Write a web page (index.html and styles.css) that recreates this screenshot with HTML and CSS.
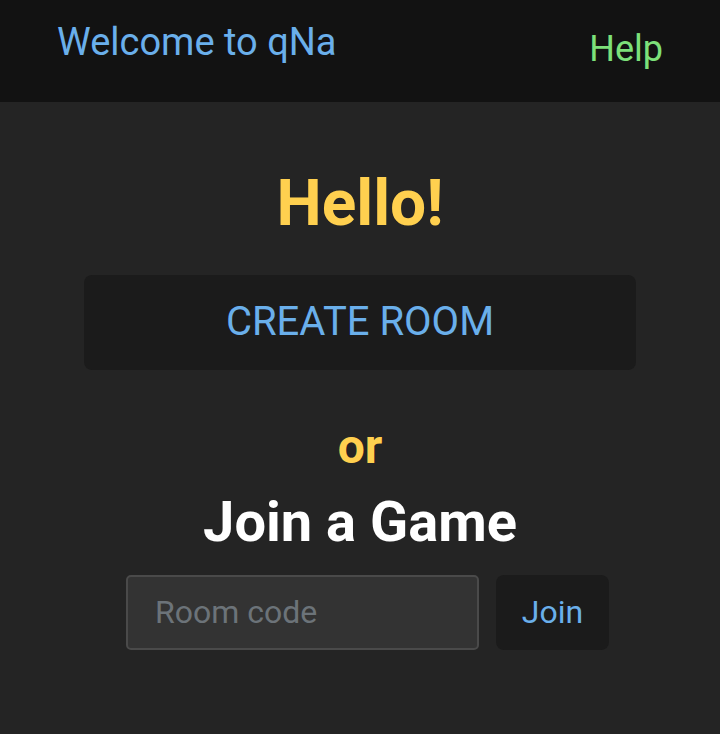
FILE: index.html
```html
<!DOCTYPE html>
<html lang="en">
<head>
<meta charset="utf-8">
<title>qNa</title>
<link rel="stylesheet" href="styles.css">
</head>
<body>
<header class="topbar">
  <a class="brand" href="#">Welcome to qNa</a>
  <a class="help" href="#">Help</a>
</header>
<main class="home">
  <h1 class="hello">Hello!</h1>
  <button class="create" type="button">CREATE ROOM</button>
  <p class="or">or</p>
  <h2 class="join-title">Join a Game</h2>
  <form class="join-form">
    <input class="code" type="text" placeholder="Room code">
    <button class="join" type="button">Join</button>
  </form>
</main>
</body>
</html>
```
FILE: styles.css
```css
html, body {
  margin: 0;
  padding: 0;
  background: #242424;
  font-family: Roboto, "Liberation Sans", sans-serif;
  height: 100%;
}

.topbar {
  height: 102px;
  background: #121212;
  display: flex;
  justify-content: space-between;
  align-items: flex-start;
  padding: 0 57px;
  box-sizing: border-box;
}

.brand {
  color: #6aafeb;
  text-decoration: none;
  font-size: 38px;
  line-height: 1.2;
  padding-top: 20px;
}

.help {
  color: #7de07a;
  text-decoration: none;
  font-size: 36px;
  line-height: 1.2;
  padding-top: 28px;
}

.home {
  display: flex;
  flex-direction: column;
  align-items: center;
}

.hello {
  margin: 64px 0 0;
  color: #ffd04f;
  font-size: 64px;
  line-height: 1.2;
  font-weight: 700;
}

.create {
  margin-top: 32px;
  width: 552px;
  height: 95px;
  background: #1b1b1b;
  border: none;
  border-radius: 8px;
  color: #6aafeb;
  font-family: inherit;
  font-size: 40px;
  line-height: 1.2;
  padding: 0;
}

.or {
  margin: 48px 0 0;
  color: #ffd04f;
  font-size: 48px;
  font-weight: 700;
  line-height: 1.2;
}

.join-title {
  margin: 14px 0 0;
  color: #ffffff;
  font-size: 56px;
  font-weight: 700;
  line-height: 1.2;
}

.join-form {
  margin-top: 18px;
  padding-left: 15px;
  display: flex;
  gap: 17px;
}

.code {
  width: 353px;
  height: 75px;
  box-sizing: border-box;
  background: #333333;
  border: 2px solid #4a4a4a;
  border-radius: 5px;
  color: #e6e6e6;
  font-family: inherit;
  font-size: 32px;
  padding: 0 27px;
  outline: none;
}

.code::placeholder {
  color: #6c7379;
}

.join {
  width: 113px;
  height: 75px;
  background: #1b1b1b;
  border: none;
  border-radius: 8px;
  color: #6aafeb;
  font-family: inherit;
  font-size: 32px;
  padding: 0;
}
```
